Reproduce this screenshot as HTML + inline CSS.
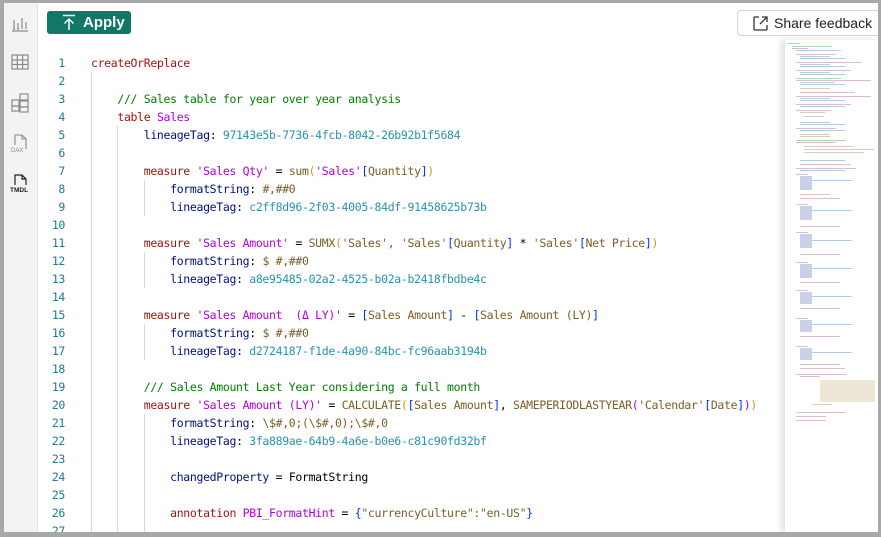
<!DOCTYPE html>
<html><head><meta charset="utf-8"><style>
*{margin:0;padding:0;box-sizing:border-box}
body{width:881px;height:537px;background:#a8a8a8;position:relative;overflow:hidden;font-family:"Liberation Sans",sans-serif}
#win{position:absolute;left:4px;top:3px;width:874px;height:529px;background:#fff;overflow:hidden}
#side{position:absolute;left:0;top:0;width:34px;height:529px;background:#f3f3f3;border-right:1px solid #e4e4e4}
#side svg{position:absolute;left:5px}
#apply{position:absolute;left:43px;top:8px;width:84px;height:23px;background:#117865;border-radius:3px;color:#fff;font-weight:bold;font-size:15px;line-height:23px;padding-left:36px}
#apply svg{position:absolute;left:14px;top:3px}
#share{position:absolute;left:733px;top:7px;width:150px;height:26px;border:1px solid #d6d6d6;border-radius:4px;font-size:14px;line-height:24px;padding-left:36px;color:#222}
#share svg{position:absolute;left:14px;top:4px}
#code{position:absolute;left:0;top:48px;font-family:"DejaVu Sans Mono",monospace;font-size:11.5px;letter-spacing:-0.33px}
.l{position:absolute;height:18px;line-height:18px;white-space:pre;left:87px}
.n{position:absolute;width:30px;left:31px;text-align:right;color:#237893;font-family:"DejaVu Sans Mono",monospace;font-size:11.5px;height:18px;line-height:18px}
.g{position:absolute;width:1px;background:#d8d8d8}
.k{color:#a31515}.s{color:#af00db}.p{color:#001080}.v{color:#2b91af}.f{color:#795e26}.c{color:#008000}.b{color:#0431fa}.y{color:#c69b1a}.t{color:#000}
#mini{position:absolute;left:781px;top:37px;width:93px;height:492px;background:#fff;box-shadow:-4px 0 6px rgba(0,0,0,.12)}
#mini i{position:absolute;height:1px;display:block;opacity:.75}
</style></head><body><div id="win">
<div id="side">
<svg style="top:11px" width="22" height="20" viewBox="0 0 22 20" fill="none" stroke="#8a8a8a" stroke-width="1.2"><path d="M3 17h16M5 15V6M9 15V9M13 15V4M17 15V8M4 15h2M8 15h2"/></svg>
<svg style="top:49px" width="22" height="20" viewBox="0 0 22 20" fill="none" stroke="#8a8a8a" stroke-width="1.2"><rect x="3" y="3" width="16" height="14"/><path d="M3 8h16M3 12.5h16M8.3 3v14M13.6 3v14"/></svg>
<svg style="top:89px" width="22" height="22" viewBox="0 0 22 22" fill="none" stroke="#8a8a8a" stroke-width="1.2"><rect x="3" y="8" width="7" height="6"/><rect x="11" y="2" width="8" height="6"/><rect x="11" y="9" width="8" height="6"/><rect x="11" y="15" width="8" height="5"/><rect x="3" y="14" width="7" height="5"/></svg>
<svg style="top:130px" width="22" height="22" viewBox="0 0 22 22" fill="none" stroke="#8a8a8a" stroke-width="1.1"><path d="M6 12V2h7l4 4v10M13 2v4h4"/><text x="2" y="19" font-size="6" fill="#8a8a8a" stroke="none" font-family="Liberation Sans">DAX</text></svg>
<svg style="top:170px" width="24" height="22" viewBox="0 0 24 22" fill="none" stroke="#222" stroke-width="1.2"><path d="M6 12V2h7l4 4v6M13 2v4h4"/><text x="1" y="19" font-size="6.5" font-weight="bold" fill="#222" stroke="none" font-family="Liberation Sans">TMDL</text></svg>
</div>
<div id="apply"><svg width="16" height="17" viewBox="0 0 16 17" fill="none" stroke="#fff" stroke-width="1.5"><path d="M2 1.5h12M8 16V5M3.5 9.5 8 5l4.5 4.5"/></svg>Apply</div>
<div id="share"><svg width="17" height="17" viewBox="0 0 17 17" fill="none" stroke="#333" stroke-width="1.3"><path d="M7 2H3a1 1 0 0 0-1 1v11a1 1 0 0 0 1 1h11a1 1 0 0 0 1-1v-4M10 2h5v5M15 2 8 9"/></svg>Share feedback</div>
<div id="code">
<div class="g" style="left:87px;top:21px;height:480px"></div>
<div class="g" style="left:113px;top:75px;height:426px"></div>
<div class="g" style="left:140px;top:129px;height:36px"></div>
<div class="g" style="left:140px;top:201px;height:36px"></div>
<div class="g" style="left:140px;top:273px;height:36px"></div>
<div class="g" style="left:140px;top:363px;height:138px"></div>
<div class="n" style="top:3px">1</div><div class="l" style="top:3px"><span class="k">createOrReplace</span></div>
<div class="n" style="top:21px">2</div>
<div class="n" style="top:39px">3</div><div class="l c" style="top:39px">    /// Sales table for year over year analysis</div>
<div class="n" style="top:57px">4</div><div class="l" style="top:57px">    <span class="k">table</span> <span class="s">Sales</span></div>
<div class="n" style="top:75px">5</div><div class="l" style="top:75px">        <span class="p">lineageTag</span>: <span class="v">97143e5b-7736-4fcb-8042-26b92b1f5684</span></div>
<div class="n" style="top:93px">6</div>
<div class="n" style="top:111px">7</div><div class="l" style="top:111px">        <span class="k">measure</span> <span class="s">'Sales Qty'</span> = <span class="f">sum</span><span class="y">(</span><span class="s">'Sales'</span><span class="b">[</span><span class="f">Quantity</span><span class="b">]</span><span class="y">)</span></div>
<div class="n" style="top:129px">8</div><div class="l" style="top:129px">            <span class="p">formatString</span>: <span class="f">#,##0</span></div>
<div class="n" style="top:147px">9</div><div class="l" style="top:147px">            <span class="p">lineageTag</span>: <span class="v">c2ff8d96-2f03-4005-84df-91458625b73b</span></div>
<div class="n" style="top:165px">10</div>
<div class="n" style="top:183px">11</div><div class="l" style="top:183px">        <span class="k">measure</span> <span class="s">'Sales Amount'</span> = <span class="f">SUMX</span><span class="y">(</span><span class="f">'Sales', 'Sales'</span><span class="b">[</span><span class="f">Quantity</span><span class="b">]</span> * <span class="f">'Sales'</span><span class="b">[</span><span class="f">Net Price</span><span class="b">]</span><span class="y">)</span></div>
<div class="n" style="top:201px">12</div><div class="l" style="top:201px">            <span class="p">formatString</span>: <span class="f">$ #,##0</span></div>
<div class="n" style="top:219px">13</div><div class="l" style="top:219px">            <span class="p">lineageTag</span>: <span class="v">a8e95485-02a2-4525-b02a-b2418fbdbe4c</span></div>
<div class="n" style="top:237px">14</div>
<div class="n" style="top:255px">15</div><div class="l" style="top:255px">        <span class="k">measure</span> <span class="s">'Sales Amount  (Δ LY)'</span> = <span class="b">[</span><span class="f">Sales Amount</span><span class="b">]</span> - <span class="b">[</span><span class="f">Sales Amount (LY)</span><span class="b">]</span></div>
<div class="n" style="top:273px">16</div><div class="l" style="top:273px">            <span class="p">formatString</span>: <span class="f">$ #,##0</span></div>
<div class="n" style="top:291px">17</div><div class="l" style="top:291px">            <span class="p">lineageTag</span>: <span class="v">d2724187-f1de-4a90-84bc-fc96aab3194b</span></div>
<div class="n" style="top:309px">18</div>
<div class="n" style="top:327px">19</div><div class="l c" style="top:327px">        /// Sales Amount Last Year considering a full month</div>
<div class="n" style="top:345px">20</div><div class="l" style="top:345px">        <span class="k">measure</span> <span class="s">'Sales Amount (LY)'</span> = <span class="f">CALCULATE</span><span class="y">(</span><span class="b">[</span><span class="f">Sales Amount</span><span class="b">]</span>, <span class="f">SAMEPERIODLASTYEAR</span><span class="s">(</span><span class="f">'Calendar'</span><span class="b">[</span><span class="f">Date</span><span class="b">]</span><span class="s">)</span><span class="y">)</span></div>
<div class="n" style="top:363px">21</div><div class="l" style="top:363px">            <span class="p">formatString</span>: <span class="f">\$#,0;(\$#,0);\$#,0</span></div>
<div class="n" style="top:381px">22</div><div class="l" style="top:381px">            <span class="p">lineageTag</span>: <span class="v">3fa889ae-64b9-4a6e-b0e6-c81c90fd32bf</span></div>
<div class="n" style="top:399px">23</div>
<div class="n" style="top:417px">24</div><div class="l" style="top:417px">            <span class="p">changedProperty</span> = <span class="t">FormatString</span></div>
<div class="n" style="top:435px">25</div>
<div class="n" style="top:453px">26</div><div class="l" style="top:453px">            <span class="k">annotation</span> <span class="s">PBI_FormatHint</span> = <span class="b">{</span><span class="f">"currencyCulture":"en-US"</span><span class="b">}</span></div>
<div class="n" style="top:471px">27</div>
</div>
<div id="mini">
<i style="left:3px;top:3px;width:12px;background:#d8a0a0"></i>
<i style="left:7px;top:6px;width:40px;background:#9c9"></i>
<i style="left:7px;top:8px;width:16px;background:#c9c"></i>
<i style="left:11px;top:10px;width:45px;background:#9bd"></i>
<i style="left:11px;top:14px;width:40px;background:#cab"></i>
<i style="left:15px;top:16px;width:30px;background:#abc"></i>
<i style="left:15px;top:18px;width:45px;background:#9bd"></i>
<i style="left:11px;top:22px;width:65px;background:#cab"></i>
<i style="left:15px;top:24px;width:30px;background:#abc"></i>
<i style="left:15px;top:26px;width:45px;background:#9bd"></i>
<i style="left:11px;top:30px;width:55px;background:#cab"></i>
<i style="left:15px;top:32px;width:30px;background:#abc"></i>
<i style="left:15px;top:34px;width:45px;background:#9bd"></i>
<i style="left:11px;top:38px;width:45px;background:#9c9"></i>
<i style="left:11px;top:40px;width:75px;background:#cab"></i>
<i style="left:15px;top:42px;width:35px;background:#abc"></i>
<i style="left:15px;top:44px;width:45px;background:#9bd"></i>
<i style="left:15px;top:48px;width:30px;background:#cba"></i>
<i style="left:15px;top:52px;width:55px;background:#cab"></i>
<i style="left:11px;top:56px;width:75px;background:#cab"></i>
<i style="left:15px;top:58px;width:30px;background:#abc"></i>
<i style="left:15px;top:60px;width:45px;background:#9bd"></i>
<i style="left:11px;top:64px;width:55px;background:#cab"></i>
<i style="left:15px;top:66px;width:45px;background:#9bd"></i>
<i style="left:11px;top:70px;width:35px;background:#cab"></i>
<i style="left:15px;top:72px;width:25px;background:#cba"></i>
<i style="left:19px;top:76px;width:20px;background:#cba"></i>
<i style="left:15px;top:82px;width:30px;background:#abc"></i>
<i style="left:15px;top:84px;width:45px;background:#9bd"></i>
<i style="left:11px;top:88px;width:40px;background:#cab"></i>
<i style="left:15px;top:90px;width:45px;background:#9bd"></i>
<i style="left:15px;top:94px;width:30px;background:#cba"></i>
<i style="left:15px;top:96px;width:30px;background:#cba"></i>
<i style="left:11px;top:100px;width:50px;background:#9c9"></i>
<i style="left:11px;top:102px;width:40px;background:#cab"></i>
<i style="left:19px;top:106px;width:50px;background:#cba"></i>
<i style="left:19px;top:109px;width:70px;background:#cba"></i>
<i style="left:19px;top:112px;width:60px;background:#cba"></i>
<i style="left:15px;top:120px;width:45px;background:#9bd"></i>
<i style="left:15px;top:124px;width:50px;background:#cab"></i>
<i style="left:11px;top:128px;width:60px;background:#cab"></i>
<i style="left:15px;top:130px;width:45px;background:#9bd"></i>
<i style="left:11px;top:134px;width:12px;background:#cab"></i>
<i style="left:15px;top:136px;width:12px;height:14px;background:#b8c0e0"></i>
<i style="left:27px;top:140px;width:40px;background:#9bd"></i>
<i style="left:15px;top:154px;width:30px;background:#cba"></i>
<i style="left:15px;top:158px;width:40px;background:#cab"></i>
<i style="left:11px;top:164px;width:12px;background:#cab"></i>
<i style="left:15px;top:166px;width:12px;height:14px;background:#b8c0e0"></i>
<i style="left:27px;top:170px;width:40px;background:#9bd"></i>
<i style="left:15px;top:186px;width:40px;background:#cab"></i>
<i style="left:11px;top:192px;width:12px;background:#cab"></i>
<i style="left:15px;top:194px;width:12px;height:14px;background:#b8c0e0"></i>
<i style="left:27px;top:200px;width:40px;background:#9bd"></i>
<i style="left:15px;top:214px;width:40px;background:#cab"></i>
<i style="left:11px;top:222px;width:12px;background:#cab"></i>
<i style="left:15px;top:224px;width:12px;height:14px;background:#b8c0e0"></i>
<i style="left:27px;top:228px;width:40px;background:#9bd"></i>
<i style="left:15px;top:242px;width:40px;background:#cab"></i>
<i style="left:11px;top:250px;width:12px;background:#cab"></i>
<i style="left:15px;top:252px;width:12px;height:12px;background:#b8c0e0"></i>
<i style="left:27px;top:256px;width:40px;background:#9bd"></i>
<i style="left:15px;top:268px;width:40px;background:#cab"></i>
<i style="left:11px;top:278px;width:12px;background:#cab"></i>
<i style="left:15px;top:280px;width:12px;height:12px;background:#b8c0e0"></i>
<i style="left:27px;top:284px;width:40px;background:#9bd"></i>
<i style="left:15px;top:296px;width:40px;background:#cab"></i>
<i style="left:11px;top:306px;width:12px;background:#cab"></i>
<i style="left:15px;top:308px;width:12px;height:12px;background:#b8c0e0"></i>
<i style="left:27px;top:312px;width:40px;background:#9bd"></i>
<i style="left:15px;top:324px;width:40px;background:#cab"></i>
<i style="left:15px;top:328px;width:45px;background:#cab"></i>
<i style="left:11px;top:334px;width:50px;background:#cab"></i>
<i style="left:15px;top:336px;width:20px;background:#cab"></i>
<i style="left:35px;top:340px;width:55px;height:22px;background:#e8dfc8"></i>
<i style="left:27px;top:364px;width:20px;background:#cba"></i>
<i style="left:11px;top:372px;width:50px;background:#cab"></i>
<i style="left:11px;top:376px;width:30px;background:#cab"></i>
<i style="left:11px;top:380px;width:30px;background:#cab"></i>
</div>
</div></body></html>
